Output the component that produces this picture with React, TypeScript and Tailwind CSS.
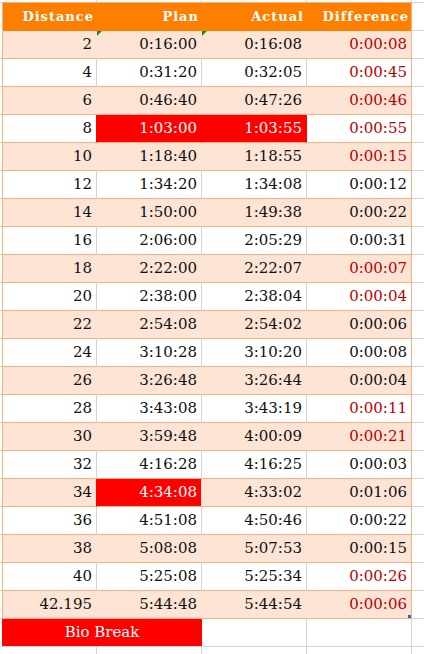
import React from 'react';

type Row = { dist: string; plan: string; actual: string; diff: string; late: boolean; planRed?: boolean; actualRed?: boolean };

const rows: Row[] = [
  { dist: '2', plan: '0:16:00', actual: '0:16:08', diff: '0:00:08', late: true },
  { dist: '4', plan: '0:31:20', actual: '0:32:05', diff: '0:00:45', late: true },
  { dist: '6', plan: '0:46:40', actual: '0:47:26', diff: '0:00:46', late: true },
  { dist: '8', plan: '1:03:00', actual: '1:03:55', diff: '0:00:55', late: true, planRed: true, actualRed: true },
  { dist: '10', plan: '1:18:40', actual: '1:18:55', diff: '0:00:15', late: true },
  { dist: '12', plan: '1:34:20', actual: '1:34:08', diff: '0:00:12', late: false },
  { dist: '14', plan: '1:50:00', actual: '1:49:38', diff: '0:00:22', late: false },
  { dist: '16', plan: '2:06:00', actual: '2:05:29', diff: '0:00:31', late: false },
  { dist: '18', plan: '2:22:00', actual: '2:22:07', diff: '0:00:07', late: true },
  { dist: '20', plan: '2:38:00', actual: '2:38:04', diff: '0:00:04', late: true },
  { dist: '22', plan: '2:54:08', actual: '2:54:02', diff: '0:00:06', late: false },
  { dist: '24', plan: '3:10:28', actual: '3:10:20', diff: '0:00:08', late: false },
  { dist: '26', plan: '3:26:48', actual: '3:26:44', diff: '0:00:04', late: false },
  { dist: '28', plan: '3:43:08', actual: '3:43:19', diff: '0:00:11', late: true },
  { dist: '30', plan: '3:59:48', actual: '4:00:09', diff: '0:00:21', late: true },
  { dist: '32', plan: '4:16:28', actual: '4:16:25', diff: '0:00:03', late: false },
  { dist: '34', plan: '4:34:08', actual: '4:33:02', diff: '0:01:06', late: false, planRed: true },
  { dist: '36', plan: '4:51:08', actual: '4:50:46', diff: '0:00:22', late: false },
  { dist: '38', plan: '5:08:08', actual: '5:07:53', diff: '0:00:15', late: false },
  { dist: '40', plan: '5:25:08', actual: '5:25:34', diff: '0:00:26', late: true },
  { dist: '42.195', plan: '5:44:48', actual: '5:44:54', diff: '0:00:06', late: true },
];

// green error marker in a cell corner
const Marker = () => (
  <svg className="absolute left-0 top-0" width="5" height="5" viewBox="0 0 5 5">
    <polygon points="0,0 5,0 0,5" fill="#1f8a2a" />
  </svg>
);

const grid = 'border-[#d4d4d4]';

export default function App() {
  return (
    <div className="w-[424px] h-[654px] overflow-hidden bg-white font-['DejaVu_Serif','Liberation_Serif',serif] text-[15px] text-[#111]">
      {/* top sliver of the sheet */}
      <div className="flex h-[2px]">
        <div className="w-[2px]" />
        <div className={`w-[95px] border-r ${grid}`} />
        <div className={`w-[105px] border-r ${grid}`} />
        <div className={`w-[105px] border-r ${grid}`} />
        <div className={`w-[105px] border-r ${grid}`} />
        <div className="flex-1" />
      </div>

      {/* Header */}
      <div className="flex h-[29px]">
        <div className={`w-[2px] border-t ${grid}`} />
        <div className="flex w-[410px] border-t border-l border-r border-[#f4b183] bg-[#fe7f00] text-[13px] font-bold tracking-[1px] text-white">
          <div className="flex w-[94px] items-center justify-end pr-[3px]">Distance</div>
          <div className="flex w-[105px] items-center justify-end pr-[3px]">Plan</div>
          <div className="flex w-[105px] items-center justify-end pr-[3px]">Actual</div>
          <div className="flex w-[104px] items-center justify-end pr-[2px]">Difference</div>
        </div>
        <div className={`flex-1 border-t border-b ${grid}`} />
      </div>

      {/* Splits */}
      {rows.map((r, i) => {
        const peach = i % 2 === 0;
        const bg = peach ? 'bg-[#fde4d5]' : 'bg-white';
        const divider = peach ? 'border-r-[#fde4d5]' : 'border-r-[#d4d4d4]';
        const last = i === rows.length - 1;
        return (
          <div key={r.dist} className="flex h-[28px]">
            <div className={`w-[2px] border-b ${grid}`} />
            <div className={`flex w-[95px] items-center justify-end border-l border-b border-r border-b-[#f4b183] border-l-[#f4b183] pr-[4px] ${bg} ${r.planRed ? 'border-r-[#ff0000]' : divider}`}>
              {r.dist}
            </div>
            <div
              className={`relative flex w-[105px] items-center justify-end border-b border-r border-b-[#f4b183] pr-[4px] ${
                r.planRed ? `bg-[#ff0000] text-white ${r.actualRed ? 'border-r-[#ff0000]' : divider}` : `${bg} ${divider}`
              }`}
            >
              {i === 0 && <Marker />}
              {r.plan}
            </div>
            <div
              className={`relative flex w-[105px] items-center justify-end border-b border-r border-b-[#f4b183] pr-[4px] ${
                r.actualRed ? 'bg-[#ff0000] border-r-[#ff0000] text-white' : `${bg} ${divider}`
              }`}
            >
              {i === 0 && <Marker />}
              {r.actual}
            </div>
            <div className={`relative flex w-[105px] items-center justify-end border-b border-r border-[#f4b183] pr-[4px] ${bg} ${r.late ? 'text-[#c00000]' : ''}`}>
              {r.diff}
              {last && <div className="absolute bottom-0 right-0 h-[3px] w-[3px] bg-[#4c5bd4]" />}
            </div>
            <div className={`flex-1 border-b ${grid}`} />
          </div>
        );
      })}

      {/* Bio break legend */}
      <div className="flex h-[28px]">
        <div className={`w-[2px] border-b ${grid}`} />
        <div className={`flex w-[200px] items-center justify-center border-b ${grid} bg-[#ff0000] text-white`}>
          Bio Break
        </div>
        <div className={`w-[105px] border-b border-r ${grid}`} />
        <div className={`w-[105px] border-b border-r ${grid}`} />
        <div className={`flex-1 border-b ${grid}`} />
      </div>

      {/* next empty row */}
      <div className="flex h-[28px]">
        <div className="w-[2px]" />
        <div className={`w-[95px] border-r ${grid}`} />
        <div className={`w-[105px] border-r ${grid}`} />
        <div className={`w-[105px] border-r ${grid}`} />
        <div className={`w-[105px] border-r ${grid}`} />
        <div className="flex-1" />
      </div>
    </div>
  );
}
